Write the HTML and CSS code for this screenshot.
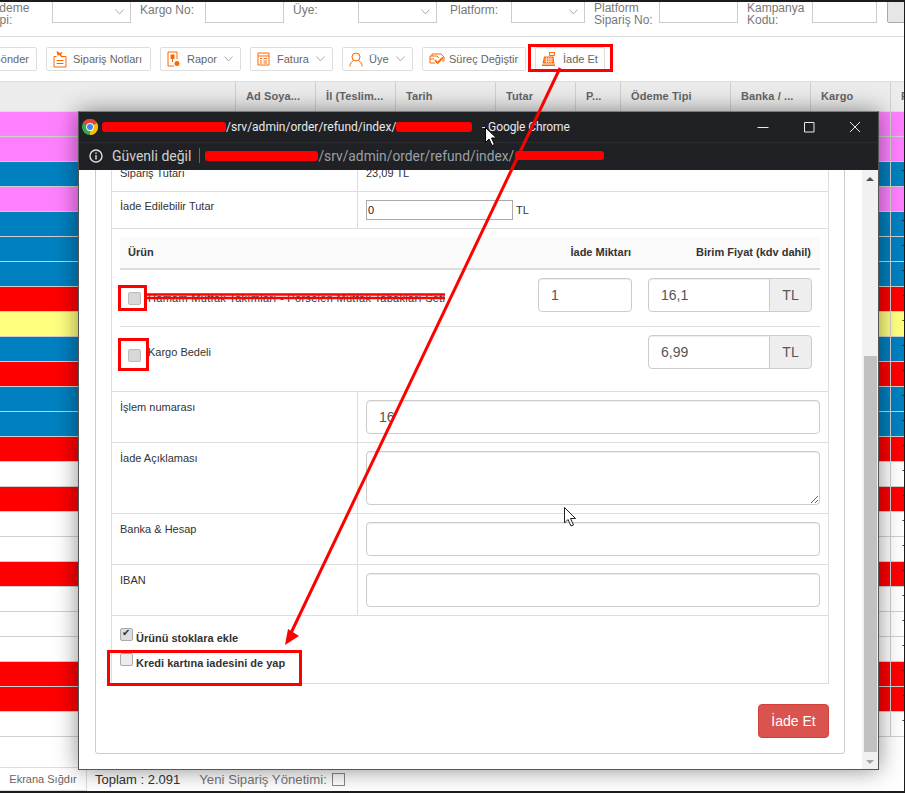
FILE: index.html
```html
<!DOCTYPE html>
<html lang="tr">
<head>
    <meta charset="UTF-8">
    <meta name="viewport" content="width=device-width, initial-scale=1.0">
    <title>Sipariş Yönetimi</title>
    <link rel="stylesheet" href="styles.css">
</head>
<body>

<div class="screen">

    <div class="filters">
        <label class="flabel two w62">Ödeme Tipi:</label>
        <div class="fctl w79 sel"><svg class="chev" width="9" height="6" viewBox="0 0 9 6"><path d="M.5.5l4 4.5 4-4.5"/></svg></div>
        <label class="flabel w65 gap">Kargo No:</label>
        <div class="fctl w79"></div>
        <label class="flabel w65 gap">Üye:</label>
        <div class="fctl w79 sel"><svg class="chev" width="9" height="6" viewBox="0 0 9 6"><path d="M.5.5l4 4.5 4-4.5"/></svg></div>
        <label class="flabel w61 gap13">Platform:</label>
        <div class="fctl w74 sel"><svg class="chev" width="9" height="6" viewBox="0 0 9 6"><path d="M.5.5l4 4.5 4-4.5"/></svg></div>
        <label class="flabel two w65 gap">Platform Sipariş No:</label>
        <div class="fctl w79"></div>
        <label class="flabel two w65 gap">Kampanya Kodu:</label>
        <div class="fctl w65"></div>
        <div class="fbtn"></div>
    </div>

    <div class="toolbar">
        <button class="tbtn first">Gönder</button>
        <button class="tbtn w105">
            <svg class="ico" width="14" height="18" viewBox="0 0 14 18"><path d="M1 6.500h2.500M8 6.500h5V17H1V6.500M3.500 10.500h7M3.500 13.500h7"/><path class="fill" d="M3.500 1l3.500 2 2-1 .5 1-1.500 1 1.500 3-1 .5-2-2.500-2 .5z"/></svg>
            Sipariş Notları
        </button>
        <button class="tbtn w81">
            <svg class="ico" width="13" height="16" viewBox="0 0 13 16"><path d="M7 15H1V1h9v7"/><path class="fill" d="M3.500 3.500h4v4.500h-1.500v3h-1v-3h-1.500z"/><circle class="fill" cx="10" cy="12.500" r="2.500"/></svg>
            Rapor
            <svg class="chev tchev" width="9" height="6" viewBox="0 0 9 6"><path d="M.5.5l4 4.5 4-4.5"/></svg>
        </button>
        <button class="tbtn w83">
            <svg class="ico" width="13" height="14" viewBox="0 0 13 14"><path d="M1 1h11v12H1zM1 4h11M3 6.500h2M6.500 6.500H10M3 9h2M6.500 9H10M3 11h2M6.500 11H10"/></svg>
            Fatura
            <svg class="chev tchev" width="9" height="6" viewBox="0 0 9 6"><path d="M.5.5l4 4.5 4-4.5"/></svg>
        </button>
        <button class="tbtn w71">
            <svg class="ico" width="14" height="15" viewBox="0 0 14 15"><circle cx="7" cy="5" r="4"/><path d="M4.500 8.500C2.500 9.500 1 12 .8 14.500M9.500 8.500c2 1 3.500 3.500 3.700 6"/></svg>
            Üye
            <svg class="chev tchev" width="9" height="6" viewBox="0 0 9 6"><path d="M.5.5l4 4.500 4-4.500"/></svg>
        </button>
        <button class="tbtn w104">
            <svg class="ico" width="16" height="12" viewBox="0 0 16 12"><path d="M3 3V1h9l3 3v4h-2M1 3h7l2 2M1 3v7h5M1 6h4"/><path d="M6 7l2.500 3L14 4.500" stroke-width="1.800"/></svg>
            Süreç Değiştir
        </button>
        <button class="tbtn w70">
            <svg class="ico" width="13" height="14" viewBox="0 0 13 14"><rect class="fill" x="0" y="12.500" width="13" height="1.500"/><path class="fill" d="M2 4.500h9.500l1 7H.5z"/><path d="M7.500 .5h5v3h-5z"/><path class="gaps" d="M2.500 7h8.500M2.200 9.200h9M4.500 5v6M6.800 5v6M9 5v6"/></svg>
            İade Et
        </button>
    </div>

    <div class="thead">
        <div class="th w236"></div>
        <div class="th w80">Ad Soya...</div>
        <div class="th w80">İl (Teslim...</div>
        <div class="th w100">Tarih</div>
        <div class="th w80">Tutar</div>
        <div class="th w45">P...</div>
        <div class="th w110">Ödeme Tipi</div>
        <div class="th w80">Banka / ...</div>
        <div class="th w80">Kargo</div>
        <div class="th last">P</div>
    </div>

    <div class="rows">
        <div class="row pink"><div class="cell"></div><div class="cell-end"></div></div>
        <div class="row pink"><div class="cell"></div><div class="cell-end"></div></div>
        <div class="row blue"><div class="cell"></div><div class="cell-end">TL</div></div>
        <div class="row pink"><div class="cell"></div><div class="cell-end"></div></div>
        <div class="row blue"><div class="cell"></div><div class="cell-end">TL</div></div>
        <div class="row blue"><div class="cell"></div><div class="cell-end">TL</div></div>
        <div class="row blue"><div class="cell"></div><div class="cell-end">TL</div></div>
        <div class="row red"><div class="cell"></div><div class="cell-end">TL</div></div>
        <div class="row yellow"><div class="cell"></div><div class="cell-end">TL</div></div>
        <div class="row blue"><div class="cell"></div><div class="cell-end">TL</div></div>
        <div class="row red"><div class="cell"></div><div class="cell-end">TL</div></div>
        <div class="row blue"><div class="cell"></div><div class="cell-end">TL</div></div>
        <div class="row blue"><div class="cell"></div><div class="cell-end">TL</div></div>
        <div class="row red"><div class="cell"></div><div class="cell-end">TL</div></div>
        <div class="row"><div class="cell"></div><div class="cell-end">TL</div></div>
        <div class="row red"><div class="cell"></div><div class="cell-end">TL</div></div>
        <div class="row"><div class="cell"></div><div class="cell-end">TL</div></div>
        <div class="row"><div class="cell"></div><div class="cell-end">TL</div></div>
        <div class="row red"><div class="cell"></div><div class="cell-end">TL</div></div>
        <div class="row"><div class="cell"></div><div class="cell-end">TL</div></div>
        <div class="row"><div class="cell"></div><div class="cell-end">TL</div></div>
        <div class="row"><div class="cell"></div><div class="cell-end">TL</div></div>
        <div class="row red"><div class="cell"></div><div class="cell-end">TL</div></div>
        <div class="row red"><div class="cell"></div><div class="cell-end">TL</div></div>
        <div class="row"><div class="cell"></div><div class="cell-end">TL</div></div>
    </div>

    <div class="footer">
        <button class="fit">Ekrana Sığdır</button>
        <span class="total">Toplam : 2.091</span>
        <span class="newmgmt">Yeni Sipariş Yönetimi:</span>
        <span class="newbox"></span>
    </div>

    <!-- popup penceresi -->
    <div class="popup">
        <div class="titlebar">
            <svg class="chrome" width="16" height="16" viewBox="0 0 16 16">
                <circle cx="8" cy="8" r="8" fill="#34a853"/>
                <path d="M8 8L1.070 4A8 8 0 0 1 14.930 4z" fill="#ea4335"/>
                <path d="M8 8h-.01L14.930 4A8 8 0 0 1 8 16z" fill="#fbbc05"/>
                <circle cx="8" cy="8" r="3.900" fill="#fff"/>
                <circle cx="8" cy="8" r="3" fill="#4285f4"/>
            </svg>
            <span class="redact r124"></span>
            <span class="wintitle">/srv/admin/order/refund/index/</span>
            <span class="redact r76"></span>
            <span class="wintitle appname">- Google Chrome</span>
            <div class="winbtns">
                <svg width="46" height="12" viewBox="0 0 46 12"><path d="M17.500 6.500h11"/></svg>
                <svg width="46" height="12" viewBox="0 0 46 12"><path d="M18.500 1.500h9.500v9.500h-9.500z"/></svg>
                <svg width="46" height="12" viewBox="0 0 46 12"><path d="M18 1l10 10M28 1L18 11"/></svg>
            </div>
        </div>
        <div class="addressbar">
            <svg class="info" width="14" height="14" viewBox="0 0 14 14"><circle cx="7" cy="7" r="6"/><path d="M7 6v4.500M7 3.500v1.500"/></svg>
            <span class="notsecure">Güvenli değil</span>
            <span class="addr-sep"></span>
            <span class="redact r113"></span>
            <span class="url">/srv/admin/order/refund/index/</span>
            <span class="redact r89"></span>
        </div>

        <div class="popup-body">
            <div class="content">
                <div class="panel">
                    <div class="formtable">
                        <div class="frow">
                            <div class="fcol-l tight">Sipariş Tutarı</div>
                            <div class="fcol-r tight">23,09 TL</div>
                        </div>
                        <div class="frow">
                            <div class="fcol-l tight">İade Edilebilir Tutar</div>
                            <div class="fcol-r"><input class="small-input" type="text" value="0"><span class="small-unit">TL</span></div>
                        </div>
                        <div class="frow products">
                            <div class="phead">
                                <span class="pname">Ürün</span>
                                <span class="pqty">İade Miktarı</span>
                                <span class="pprice">Birim Fiyat (kdv dahil)</span>
                            </div>
                            <div class="prow">
                                <div class="pname">
                                    <input class="chk" type="checkbox" disabled>
                                    <span class="pitem">Hamam Mutfak Takımları - Porselen Mutfak Tabakları Seti</span>
                                </div>
                                <input class="ctl pqty" type="text" value="1">
                                <div class="pprice group"><input class="ctl" type="text" value="16,1"><span class="addon">TL</span></div>
                            </div>
                            <div class="prow last-prow">
                                <div class="pname">
                                    <input class="chk" type="checkbox" disabled>
                                    <span class="pitem up">Kargo Bedeli</span>
                                </div>
                                <div class="pprice group"><input class="ctl" type="text" value="6,99"><span class="addon">TL</span></div>
                            </div>
                        </div>
                        <div class="frow">
                            <div class="fcol-l">İşlem numarası</div>
                            <div class="fcol-r"><input class="ctl" type="text" value="16"></div>
                        </div>
                        <div class="frow">
                            <div class="fcol-l">İade Açıklaması</div>
                            <div class="fcol-r"><textarea class="ctl area"></textarea></div>
                        </div>
                        <div class="frow">
                            <div class="fcol-l">Banka &amp; Hesap</div>
                            <div class="fcol-r"><input class="ctl" type="text"></div>
                        </div>
                        <div class="frow">
                            <div class="fcol-l">IBAN</div>
                            <div class="fcol-r"><input class="ctl" type="text"></div>
                        </div>
                        <div class="frow checks">
                            <label class="checkline"><input class="chk on" type="checkbox" checked>Ürünü stoklara ekle</label>
                            <label class="checkline"><input class="chk on" type="checkbox">Kredi kartına iadesini de yap</label>
                        </div>
                    </div>
                    <div class="actions"><button class="refund">İade Et</button></div>
                </div>
            </div>
            <div class="scrollbar">
                <span class="arrow-up"></span>
                <span class="thumb"></span>
                <span class="arrow-down"></span>
            </div>
        </div>
    </div>

    <!-- ekran görüntüsü üzerine çizilen işaretler -->
    <svg class="marks" width="905" height="793" viewBox="0 0 905 793">
        <g fill="none" stroke="#f00" stroke-width="3">
            <rect x="529.500" y="45.500" width="82" height="25"/>
            <rect x="119.500" y="286.500" width="26" height="23"/>
            <rect x="119.500" y="339.500" width="28" height="30"/>
            <rect x="108.500" y="651.500" width="192" height="33"/>
            <path d="M560 68L291 633"/>
            <path d="M144 294.500h301M147 298h298" stroke-width="2.500"/>
        </g>
        <path d="M285 645l3-16 11 7z" fill="#f00"/>
        <path d="M485.500 127.500v15l3.500-3.500 3 6.500 2.500-1-3-6.500h5z" fill="#fff" stroke="#000"/>
        <path d="M564.500 507.500v15.500l3.500-3.500 3 6.500 2.500-1-3-6.500h5z" fill="#fff" stroke="#222"/>
    </svg>

</div>

</body>
</html>
```
FILE: styles.css
```css
* {
    box-sizing: border-box;
}
body {
    margin: 0;
    font-family: "Liberation Sans", Arial, sans-serif;
    font-size: 11px;
    color: #333;
    background: #fff;
}
.screen {
    position: relative;
    width: 905px;
    height: 793px;
    overflow: hidden;
    border-top: 2px solid #1c1c1c;
    border-right: 1px solid #1c1c1c;
    border-bottom: 2px solid #1c1c1c;
}

/* filtreler */
.filters {
    display: flex;
    align-items: flex-start;
    height: 35px;
    margin-left: -10px;
    border-bottom: 1px solid #ddd;
}
.flabel {
    flex: none;
    padding-top: 2px;
    font-size: 12px;
    line-height: 12px;
    color: #777;
}
.flabel.two { padding-top: 0; }
.gap { margin-left: 9px; }
.gap13 { margin-left: 13px; }
.w61 { width: 61px; }
.w62 { width: 62px; }
.w65 { width: 65px; }
.w74 { width: 74px; }
.w79 { width: 79px; }
.fctl {
    flex: none;
    height: 22px;
    margin-top: -1px;
    border: 1px solid #ccc;
    background: #fff;
    display: flex;
    align-items: center;
    justify-content: flex-end;
    padding-right: 6px;
}
.chev {
    fill: none;
    stroke: #aaa;
}
.fbtn {
    flex: none;
    width: 40px;
    height: 22px;
    margin: -1px 0 0 10px;
    background: #e6e6e6;
    border: 1px solid #aaa;
    border-radius: 2px;
}

/* araç çubuğu */
.toolbar {
    display: flex;
    gap: 9px;
    height: 44px;
    padding-top: 10px;
    margin-left: -10px;
    margin-right: -50px;
}
.tbtn {
    display: flex;
    flex: none;
    align-items: center;
    height: 24px;
    padding: 0 0 0 6px;
    background: #fff;
    border: 1px solid #ddd;
    border-radius: 2px;
    font-family: inherit;
    font-size: 11px;
    color: #666;
    white-space: nowrap;
}
.first { width: 47px; padding: 0 7px 0 0; justify-content: flex-end; }
.w105 { width: 105px; }
.w81 { width: 81px; }
.w83 { width: 83px; }
.w71 { width: 71px; }
.w104 { width: 104px; }
.w70 { width: 70px; }
.ico {
    flex: none;
    margin-right: 6px;
    fill: none;
    stroke: #f60;
}
.w81 .ico, .w83 .ico { margin-right: 7px; }
.w104 .ico { margin-right: 4px; }
.w70 .ico { margin-right: 8px; }
.ico .fill { fill: #f60; stroke: none; }
.ico .gaps { stroke: #fff; stroke-width: .7; }
.tchev { margin-left: auto; margin-right: 7px; }

/* tablo başlığı */
.thead {
    display: flex;
    height: 31px;
    background: #ececec;
    border-top: 1px solid #ddd;
    border-bottom: 1px solid #ddd;
}
.th {
    flex: none;
    padding-left: 10px;
    font-weight: bold;
    letter-spacing: .1px;
    line-height: 29px;
    color: #666;
    border-right: 1px solid #d0d0d0;
    white-space: nowrap;
}
.w236 { width: 236px; }
.w80 { width: 80px; }
.w100 { width: 100px; }
.w45 { width: 45px; }
.w110 { width: 110px; }
.th.last { border-right: 0; flex: 1; overflow: hidden; }

/* satırlar */
.row {
    display: flex;
    height: 25px;
    border-bottom: 1px solid #d0d0d0;
}
.pink { background: #ff80ff; }
.blue { background: #0080c0; }
.red { background: #f00; }
.yellow { background: #ffff80; }
.cell {
    width: 891px;
    flex: none;
    border-right: 1px solid #d0d0d0;
}
.cell-end {
    flex: 1;
    overflow: hidden;
    padding-left: 11px;
    line-height: 24px;
    color: #222;
}

/* alt çubuk */
.footer {
    position: absolute;
    left: 0;
    right: 0;
    bottom: 0;
    height: 24px;
    display: flex;
    align-items: center;
}
.fit {
    width: 87px;
    height: 24px;
    background: #fff;
    border: 1px solid #ddd;
    border-left: 0;
    font-family: inherit;
    font-size: 11px;
    color: #666;
}
.total {
    margin-left: 8px;
    font-size: 13px;
    color: #333;
}
.newmgmt {
    margin-left: 19px;
    font-size: 13.200px;
    color: #777;
}
.newbox {
    width: 13px;
    height: 13px;
    margin-left: 5px;
    border: 1px solid #888;
}

/* popup */
.popup {
    position: absolute;
    left: 78px;
    top: 109px;
    width: 801px;
    height: 659px;
    display: flex;
    flex-direction: column;
    background: #fff;
    border: 1px solid #555;
    border-top-color: #3a8fd0;
    box-shadow: 0 0 22px rgba(0, 0, 0, .45);
}
.titlebar,
.addressbar {
    flex: none;
    display: flex;
    align-items: center;
    background: #202124;
    font-family: Roboto, sans-serif;
    white-space: nowrap;
}
.titlebar {
    height: 31px;
    border-bottom: 1px solid #2b2c30;
}
.chrome {
    margin: 0 4px 0 3px;
    flex: none;
}
.redact {
    display: inline-block;
    flex: none;
    height: 10px;
    background: #f00;
    border-radius: 3px;
}
.r124 { width: 124px; }
.r76 { width: 76px; }
.r113 { width: 113px; }
.r89 { width: 89px; height: 9px; }
.wintitle {
    width: 170px;
    font-size: 12px;
    color: #e8eaed;
}
.appname {
    width: auto;
    margin-left: 10px;
    letter-spacing: -.1px;
}
.winbtns {
    margin-left: auto;
    display: flex;
}
.winbtns svg {
    fill: none;
    stroke: #e8eaed;
}
.addressbar {
    height: 27px;
    padding-bottom: 2px;
}
.info {
    margin-left: 10px;
    fill: none;
    stroke: #e0e0e0;
    stroke-width: 1.400;
}
.notsecure {
    margin-left: 9px;
    font-size: 14px;
    color: #d0d0d0;
}
.addr-sep {
    width: 1px;
    height: 15px;
    margin: 0 5px 0 8px;
    background: #666;
}
.url {
    font-size: 13.800px;
    color: #9aa0a6;
    width: 197px;
}

.popup-body {
    flex: 1;
    min-height: 0;
    display: flex;
}
.content {
    flex: 1;
    min-width: 0;
    overflow: hidden;
    display: flex;
    flex-direction: column;
    justify-content: flex-end;
    padding: 0 17px 15px 16px;
}
.panel {
    flex: none;
    padding: 15px;
    border: 1px solid #ccc;
    border-radius: 0 0 3px 3px;
}
.formtable {
    border: 1px solid #ddd;
    border-top: 0;
}
.frow {
    display: flex;
    border-top: 1px solid #ddd;
}
.fcol-l {
    width: 246px;
    flex: none;
    padding: 8px;
    border-right: 1px solid #ddd;
    line-height: 15px;
}
.fcol-r {
    flex: 1;
    min-width: 0;
    padding: 8px;
    line-height: 15px;
}
.tight {
    padding-top: 7px;
    padding-bottom: 10px;
}
.small-input {
    width: 147px;
    height: 20px;
    padding: 0 1px;
    border: 1px solid #aaa;
    font-family: inherit;
    font-size: 11px;
    color: #222;
    vertical-align: top;
}
.small-unit {
    margin-left: 3px;
    line-height: 20px;
}
.ctl {
    display: block;
    width: 100%;
    height: 34px;
    padding: 6px 12px;
    border: 1px solid #ccc;
    border-radius: 4px;
    box-shadow: inset 0 1px 1px rgba(0, 0, 0, .075);
    background: #fff;
    font-family: inherit;
    font-size: 14px;
    color: #555;
}
.area {
    height: 54px;
}
.products {
    display: block;
    padding: 8px;
}
.phead,
.prow {
    display: flex;
}
.phead {
    height: 33px;
    padding: 0 8px;
    background: #fafafa;
    border-bottom: 2px solid #ddd;
    font-weight: bold;
    line-height: 30px;
}
.prow {
    padding: 8px 8px 14px;
    border-bottom: 1px solid #ddd;
}
.last-prow {
    border-bottom: 0;
}
.pname {
    flex: 1;
    min-width: 0;
    display: flex;
    align-items: flex-start;
    white-space: nowrap;
}
.pqty {
    flex: none;
    width: 94px;
    margin-left: 8px;
    text-align: right;
}
input.pqty {
    text-align: left;
}
.pprice {
    flex: none;
    width: 164px;
    margin-left: 16px;
    text-align: right;
}
.phead .pqty {
    width: 100px;
    white-space: nowrap;
    padding-right: 1px;
}
.phead .pprice {
    white-space: nowrap;
    padding-right: 1px;
}
.group {
    display: flex;
}
.group .ctl {
    flex: 1;
    min-width: 0;
    border-radius: 4px 0 0 4px;
}
.addon {
    flex: none;
    width: 43px;
    margin-left: -1px;
    border: 1px solid #ccc;
    border-radius: 0 4px 4px 0;
    background: #eee;
    font-size: 14px;
    line-height: 32px;
    text-align: center;
    color: #555;
}
.chk {
    appearance: none;
    flex: none;
    position: relative;
    width: 13px;
    height: 13px;
    margin: 14px 7px 0 0;
    background: #d8d8d8;
    border: 1px solid #bbb;
    border-radius: 2px;
}
.pitem {
    margin-top: 14px;
    letter-spacing: .3px;
    line-height: 13px;
}
.pitem.up {
    margin-top: 11px;
    letter-spacing: 0;
}
.checks {
    display: block;
    padding: 9px 8px;
    height: 68px;
}
.checkline {
    display: flex;
    align-items: center;
    height: 25px;
    font-weight: bold;
}
.chk.on {
    margin: -6px 3px 0 0;
    background: #ececec;
    border-color: #aaa;
}
.chk.on:checked {
    background: #ddd;
}
.chk.on:checked::before {
    content: "✔";
    position: absolute;
    left: 1px;
    top: -2px;
    font-family: "DejaVu Sans", sans-serif;
    font-size: 10px;
    color: #333;
}
.actions {
    display: flex;
    justify-content: flex-end;
    margin-top: 20px;
}
.refund {
    width: 71px;
    height: 34px;
    background: #d9534f;
    border: 1px solid #d43f3a;
    border-radius: 4px;
    font-family: inherit;
    font-size: 14px;
    color: #fff;
}

/* kaydırma çubuğu */
.scrollbar {
    flex: none;
    width: 16px;
    display: flex;
    flex-direction: column;
    align-items: center;
    justify-content: space-between;
    background: #f1f1f1;
    padding: 7px 0 5px;
}
.thumb {
    width: 13px;
    height: 396px;
    margin-top: auto;
    margin-bottom: 8px;
    background: #c1c1c1;
}
.arrow-up,
.arrow-down {
    width: 0;
    height: 0;
    border-left: 4px solid transparent;
    border-right: 4px solid transparent;
}
.arrow-up { border-bottom: 4px solid #505050; }
.arrow-down { border-top: 4px solid #a3a3a3; }

.marks {
    position: absolute;
    left: 0;
    top: -2px;
    pointer-events: none;
}
```
